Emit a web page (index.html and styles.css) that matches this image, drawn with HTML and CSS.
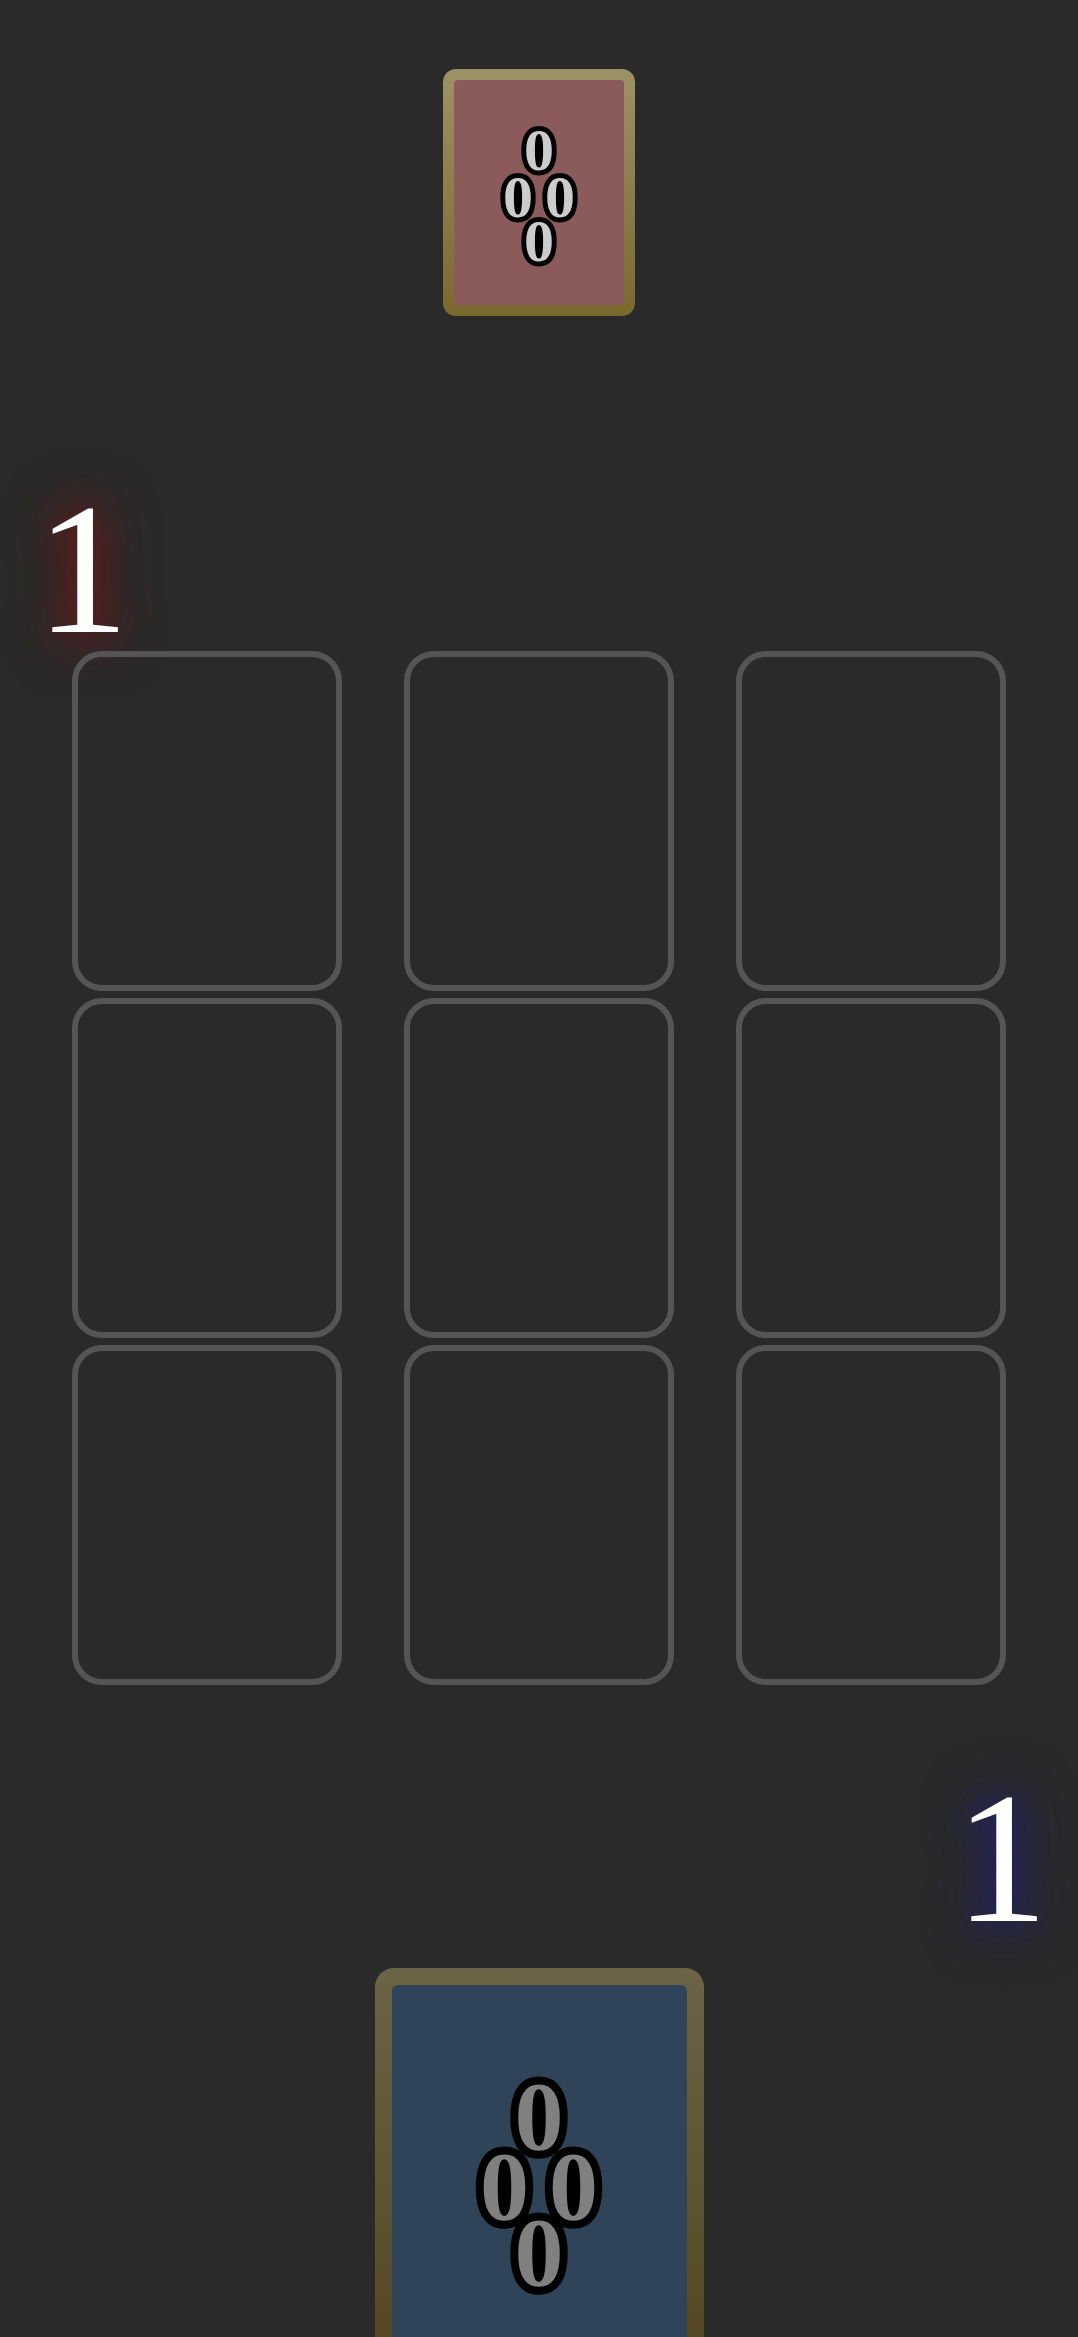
FILE: index.html
```html
<!DOCTYPE html>
<html lang="en">
<head>
<meta charset="utf-8">
<title>Card Board</title>
<link rel="stylesheet" href="styles.css">
</head>
<body>
  <section class="hand hand-opponent">
    <div class="card card-small card-red">
      <div class="face">
        <div class="pips">
          <span class="pip pip-top">0</span>
          <span class="pip pip-left">0</span>
          <span class="pip pip-right">0</span>
          <span class="pip pip-bottom">0</span>
        </div>
      </div>
    </div>
  </section>

  <div class="score score-red">1</div>

  <section class="board">
    <div class="cell"></div>
    <div class="cell"></div>
    <div class="cell"></div>
    <div class="cell"></div>
    <div class="cell"></div>
    <div class="cell"></div>
    <div class="cell"></div>
    <div class="cell"></div>
    <div class="cell"></div>
  </section>

  <div class="score score-blue">1</div>

  <section class="hand hand-player">
    <div class="card card-large card-blue">
      <div class="face">
        <div class="pips">
          <span class="pip pip-top">0</span>
          <span class="pip pip-left">0</span>
          <span class="pip pip-right">0</span>
          <span class="pip pip-bottom">0</span>
        </div>
      </div>
    </div>
  </section>
</body>
</html>
```

FILE: styles.css
```css
* { box-sizing: border-box; }

html, body {
  margin: 0;
  padding: 0;
  background: #2a2a2a;
}

body {
  font-family: "Liberation Serif", serif;
  color: #fff;
  overflow: hidden;
}

.hand {
  display: flex;
  justify-content: center;
}

.hand-opponent {
  padding-top: 69px;
}

.hand-player {
  padding-top: 40.5px;
}

.card {
  display: flex;
}

.card-small {
  width: 192px;
  height: 247px;
  padding: 11px;
  border-radius: 13px;
  background: linear-gradient(#9d9267, #7a692d);
}

.card-large {
  width: 329px;
  height: 423px;
  padding: 17px;
  border-radius: 19px;
  background: linear-gradient(#6b6446, #52451e);
}

.face {
  flex: 1;
  display: flex;
  justify-content: center;
}

.card-red .face {
  background: #8b5a5a;
  border-radius: 4px;
  padding-top: 46px;
}

.card-blue .face {
  background: #2f4359;
  border-radius: 6px;
  padding-top: 95px;
}

.pips {
  position: relative;
}

.card-small .pips { width: 80px; height: 140px; }
.card-large .pips { width: 120px; height: 210px; }

.pip {
  position: absolute;
  transform: translate(-50%, -50%);
  font-family: "Liberation Serif", serif;
  font-weight: bold;
  line-height: 1;
  -webkit-text-stroke-color: #000;
  paint-order: stroke fill;
}

.card-small .pip {
  font-size: 60px;
  color: #cccccc;
  -webkit-text-stroke-width: 10px;
}

.card-large .pip {
  font-size: 98px;
  color: #808080;
  -webkit-text-stroke-width: 16px;
}

.card-small .pip-top    { left: 40px; top: 24px; }
.card-small .pip-left   { left: 19px; top: 71px; }
.card-small .pip-right  { left: 61px; top: 71px; }
.card-small .pip-bottom { left: 40px; top: 115px; }

.card-large .pip-top    { left: 60px; top: 36px; }
.card-large .pip-left   { left: 25.5px; top: 106px; }
.card-large .pip-right  { left: 94.5px; top: 106px; }
.card-large .pip-bottom { left: 60px; top: 172px; }

.score {
  font-size: 186px;
  line-height: 140px;
  height: 140px;
}

.score-red {
  margin-top: 182.5px;
  padding-left: 36px;
  text-shadow: 0 0 40px rgba(140, 20, 20, 0.95), 0 0 60px rgba(110, 20, 20, 0.8);
}

.score-blue {
  margin-top: 102.5px;
  text-align: right;
  padding-right: 30px;
  text-shadow: 0 0 40px rgba(30, 30, 140, 0.95), 0 0 60px rgba(30, 30, 110, 0.8);
}

.board {
  margin-top: 12.5px;
  display: grid;
  grid-template-columns: repeat(3, 270px);
  grid-auto-rows: 340px;
  column-gap: 62px;
  row-gap: 7px;
  justify-content: center;
}

.cell {
  border: 6px solid #555555;
  border-radius: 30px;
}
```
